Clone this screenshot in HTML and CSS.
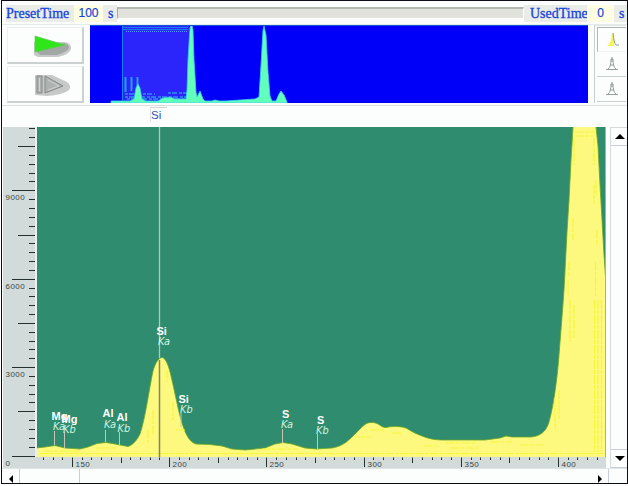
FILE: index.html
```html
<!DOCTYPE html>
<html lang="en">
<head>
    <meta charset="UTF-8">
    <title>Spectrum</title>
    <link rel="stylesheet" href="styles.css">
</head>
<body>
    <div class="window">
        <div class="topbar">
            <span class="time-label">PresetTime</span>
            <span class="time-value">100</span>
            <span class="time-unit">s</span>
            <div class="progress"></div>
            <span class="time-label used">UsedTime</span>
            <span class="time-value used-value">0</span>
            <span class="time-unit">s</span>
        </div>

        <div class="overview">
            <div class="controls">
                <button class="control" aria-label="Start">
                    <svg width="42" height="24" viewBox="0 0 42 24">
                        <path class="shadow-soft" d="M2 8V21L6 23H26Q38 20 39 15Q40 9 32 8Z"/>
                        <path class="shadow" d="M4 17L8 21H25Q35 18 37 14Q37 10 32 9Z"/>
                        <path class="go" d="M3 2L33 11L3 18Z"/>
                    </svg>
                </button>
                <button class="control" aria-label="Stop">
                    <svg width="42" height="24" viewBox="0 0 42 24">
                        <path class="shadow-soft" d="M3 2H20L35 9Q40 13 37 17Q31 22 15 23L3 22Z"/>
                        <path class="stop" d="M5 3H10V20H5ZM13 3L31 13L13 20Z"/>
                        <path class="shine" d="M7.500 5V18M16 7L27 13L16 17"/>
                    </svg>
                </button>
            </div>
            <svg class="minimap" width="498" height="78" viewBox="90 25 498 78">
                <rect class="range" x="123" y="25" width="66" height="77"/>
                <path class="range-line" d="M123 27.5H188M123 29.5H188M122.5 25V102"/>
                <path class="range-dots" d="M126 31.5H187"/>
                <path class="range-bars" d="M125.500 77V92M131.500 77V91M137.500 77V93"/>
                <path class="range-noise" d="M125 94H136M143 94H155M168 93H187M125 97H187M127 99H184"/>
                <path class="mini-curve" d="M111 103V101H130L134 99L136 88L138 84L140 88L142 99L146 101H158L163 98L170 97L175 99H186L187 90L188 60L190 27L192 25L193 30L194 60L196 92L197 97L200 91L203 99L205 101H212L215 100L219 101H226L240 100L255 99L259 97L261 65L263 30L264 26L266 35L268 72L270 96L272 101H276L279 94L281 91L284 95L287 102V103Z"/>
                <path class="mini-edge" d="M90 25.5H588"/>
            </svg>
            <div class="modes">
                <button class="mode active" aria-label="Filled peak">
                    <svg width="16" height="16" viewBox="0 0 16 16">
                        <path class="peak-fill" d="M2 14Q6 12 7 2L9 1V14Z"/>
                        <path class="peak-line" d="M8 1Q9 11 11 13H14"/>
                    </svg>
                </button>
                <button class="mode" aria-label="Outline peak">
                    <svg width="14" height="14" viewBox="0 0 14 14">
                        <path class="peak-line" d="M1 12.5H13M3 12Q6 10 6 2H8Q8 10 11 12M7 0V5M5 8H9"/>
                    </svg>
                </button>
                <button class="mode" aria-label="Line peak">
                    <svg width="14" height="14" viewBox="0 0 14 14">
                        <path class="peak-line" d="M1 12.5H13M3 12Q6 10 6 2H8Q8 10 11 12M7 0V5M5 8H9"/>
                    </svg>
                </button>
            </div>
        </div>

        <div class="element-bar"><span class="element">Si</span></div>

        <div class="main">
            <div class="chart">
                <svg class="y-axis" width="34" height="341" viewBox="3 127 34 341">
                    <g id="y-ticks"></g>
                    <path class="axis-edge" d="M36 127V457"/>
                </svg>
                <svg class="plot" width="569" height="330" viewBox="37 127 569 330">
                    <path class="cursor-top" d="M159.5 127V358"/>
                    <path class="curve" d="M36 458V448L45 447L55 445.5L65 448L80 449L88 447L97 443.5L106 442.500L115 444L128 446.500C133 445 137 440 140 434C145 420 149 390 153 371C155 364 158 358 162 357.500C166 358 169 367 171 376C176 397 178 410 182 423C186 436 190 442 196 444L210 444.500L222 446L232 449L245 450L265 448L275 444L283 442.500L292 444L305 448L316 449L332 448C344 446 349 440 358 431C363 426 366 422.500 371 422.500C379 422 381 428 386 427.500C392 426 400 426 406 428C411 431 416 434 422 436C431 440 440 440 445 440H485L500 438L506 436L512 437H531C540 436 546 432 549 422C553 408 557 382 559 355C561 330 563 305 564 290L567 232L569 200L571 160L573 127V126H596V127L598 146L600 185L602 220L604 255L606 284V458Z"/>
                    <g class="grain">
                        <path d="M594.500 300V452M598 300V452M601.500 300V452M596 180V196M597 230V246M595.500 262V296M568 280V296M573 218V240M569 262V277"/>
                        <path d="M575 132H595M575 136H594M574 138V165M594 138V165M594 185V204M570 300V342M574 305V338M555 398V430M559 390V420"/>
                        <path d="M40 453.500H604M44 451H80M96 448H116M148 430V442M153 410V434M167 370V382M173 402V420M176 430H186M262 449H298M356 437H372M370 430H384M392 433H402M424 446H440M446 443H476M450 448H480M490 442H512M520 445H545"/>
                    </g>
                    <path class="plot-edge" d="M605.5 127V457"/>
                    <path class="cursor" d="M159.5 360V457"/>
                    <path class="marker" d="M54.5 431V445M64.5 432V448M105.5 430V442M119.5 432V446M181 413V427M282.5 429V443M317.5 434V449"/>
                    <g class="symbol">
                        <text x="51.5" y="420">Mg</text>
                        <text x="61.5" y="423">Mg</text>
                        <text x="102.5" y="417">Al</text>
                        <text x="116.5" y="421">Al</text>
                        <text x="156.5" y="335">Si</text>
                        <text x="178.5" y="403">Si</text>
                        <text x="282" y="418">S</text>
                        <text x="317" y="424">S</text>
                    </g>
                    <g class="line-name">
                        <text x="53" y="430">Ka</text>
                        <text x="63" y="433">Kb</text>
                        <text x="104" y="428">Ka</text>
                        <text x="117.5" y="432">Kb</text>
                        <text x="158" y="345">Ka</text>
                        <text x="180" y="413">Kb</text>
                        <text x="281" y="428">Ka</text>
                        <text x="316" y="434">Kb</text>
                    </g>
                </svg>
                <svg class="x-axis" width="569" height="11" viewBox="37 457 569 11">
                    <g id="x-ticks"></g>
                </svg>
            </div>
            <div class="v-scroll">
                <div class="arrow-box"><span class="arrow up"></span></div>
                <div class="arrow-box down-box"><span class="arrow down"></span></div>
            </div>
        </div>

        <div class="h-scroll">
            <div class="h-arrow"><span class="arrow left"></span></div>
            <div class="thumb"></div>
            <div class="h-arrow end"><span class="arrow right"></span></div>
        </div>
    </div>
    <script src="script.js"></script>
</body>
</html>
```
FILE: styles.css
```css
* {
    box-sizing: border-box;
}
body {
    margin: 0;
    background: #fff;
    font-family: "Liberation Sans", Arial, sans-serif;
}
.window {
    width: 627px;
    height: 484px;
    margin-left: 1px;
    border: 1px solid #0c0c12;
    background: #fcfdfd;
    overflow: hidden;
}
svg {
    display: block;
}
button {
    padding: 0;
    border: 0;
    background: none;
}

/* time bar */
.topbar {
    display: flex;
    align-items: center;
    height: 24px;
    padding: 3px 0 2px 4px;
    border-bottom: 1px solid #e4ecea;
}
.topbar > * {
    flex: none;
}
.time-label, .time-unit {
    height: 17px;
    background: #e9ece7;
    color: #1745dc;
    font: 14px/17px "Liberation Serif", "Times New Roman", serif;
    -webkit-text-stroke: 0.3px #1745dc;
}
.time-label {
    width: 68px;
    letter-spacing: 0;
    white-space: nowrap;
}
.time-value {
    width: 29px;
    height: 17px;
    background: #fffde2;
    color: #1745dc;
    font-size: 12px;
    line-height: 17px;
    text-align: center;
    -webkit-text-stroke: 0.2px #1745dc;
}
.time-unit {
    width: 14px;
    padding-left: 5px;
}
.progress {
    width: 407px;
    height: 12px;
    border: 1px solid #fff;
    border-top: 2px solid #b2b7b0;
    border-left: 1px solid #a5aaa4;
    background: #e1e2dc;
}
.used {
    width: 63px;
    padding-left: 6px;
}
.used-value {
    width: 27px;
}

/* overview row */
.overview {
    display: flex;
    height: 81px;
    border-bottom: 1px solid #d9dede;
}
.controls {
    display: flex;
    flex-direction: column;
    gap: 2px;
    width: 88px;
    padding: 2px 6px 0 5px;
}
.control {
    display: flex;
    align-items: center;
    justify-content: center;
    height: 37px;
    padding: 2px 0 0 16px;
    border-right: 2px solid #cbd1d1;
    border-bottom: 2px solid #cbd1d1;
    border-top: 1px solid #edf0f0;
    border-left: 1px solid #edf0f0;
}
.shadow {
    fill: #a3a7a6;
}
.shadow-soft {
    fill: #c6c9c8;
}
.go {
    fill: #2fe61b;
    stroke: #62c955;
    stroke-width: 0.7;
}
.stop {
    fill: #aeb2b1;
    stroke: #858b89;
}
.shine {
    fill: none;
    stroke: #d0d3d2;
}
.minimap {
    background: #0000f9;
}
.range {
    fill: #2b25fb;
}
.range-line, .range-dots, .range-bars, .range-noise, .mini-edge {
    fill: none;
    stroke: #167ff0;
}
.range-dots {
    stroke: #5a9bfa;
    stroke-dasharray: 1 1;
}
.range-bars {
    stroke: #269df2;
    stroke-width: 2;
}
.range-noise {
    stroke: #2c90ee;
    stroke-width: 1.5;
    stroke-dasharray: 3 1 5 2;
}
.mini-edge {
    stroke: #1555dd;
}
.mini-curve {
    fill: #62ffba;
    stroke: #3bcbed;
    stroke-width: 0.8;
}
.modes {
    width: 32px;
    height: 78px;
    margin-left: 6px;
    border-left: 1px solid #c9d0d0;
    border-top: 1px solid #dfe5e5;
    padding: 1px 0 0 2px;
}
.mode {
    display: flex;
    align-items: center;
    justify-content: center;
    width: 100%;
    height: 25px;
    padding-left: 1px;
    border-bottom: 1px solid #c9d0d0;
}
.mode.active {
    border-top: 1px solid #adb5b5;
    border-left: 1px solid #adb5b5;
    border-bottom-color: #f2f5f5;
}
.peak-fill {
    fill: #f5f356;
}
.peak-line {
    fill: none;
    stroke: #899390;
    stroke-width: 0.9;
}

.element-bar {
    height: 21px;
    padding: 1px 0 0 148px;
}
.element {
    display: block;
    width: 17px;
    height: 15px;
    border-top: 1px solid #d2d7d9;
    border-left: 1px solid #e0e3e3;
    color: #3152c8;
    font-size: 11.5px;
    line-height: 14px;
}

/* spectrum */
.main {
    display: flex;
    height: 341px;
}
.chart {
    display: grid;
    grid-template-columns: 34px 569px;
    grid-template-rows: 330px 11px;
    width: 605px;
    padding-left: 1px;
}
.y-axis {
    grid-row: 1 / 3;
    background: #d2dada;
}
.plot {
    background: #2f8c6e;
}
.x-axis {
    background: #d2dada;
}
.axis-edge {
    stroke: #f3f7f6;
    stroke-width: 1.5;
}
.tick {
    stroke: #24302e;
    fill: none;
}
.tick-label {
    fill: #3a4644;
    font-family: "Liberation Sans", Arial, sans-serif;
    font-size: 8px;
    letter-spacing: 0.45px;
}
.curve {
    fill: #fcf97e;
    stroke: #6ba51f;
    stroke-width: 0.8;
}
.grain {
    fill: none;
    stroke: #f6f63c;
    stroke-width: 1.2;
    stroke-dasharray: 9 1 4 1;
}
.plot-edge {
    stroke: #7cc98a;
}
.cursor-top {
    stroke: #b6c4bd;
    stroke-width: 1.3;
}
.cursor {
    stroke: #86836a;
    stroke-width: 1.5;
}
.marker {
    stroke: #c5c5b5;
}
.symbol {
    fill: #fff;
    font-size: 11px;
    font-weight: bold;
}
.line-name {
    fill: #d5f5e4;
    font-family: "DejaVu Sans", sans-serif;
    font-size: 9.8px;
    font-style: italic;
}

/* scrollbars */
.v-scroll {
    display: flex;
    flex-direction: column;
    justify-content: space-between;
    width: 17px;
    margin-left: 3px;
    border-left: 1px solid #d5dadd;
    border-top: 1px solid #d5dadd;
}
.arrow-box {
    display: flex;
    align-items: center;
    justify-content: center;
    height: 18px;
    padding-left: 2px;
    border-bottom: 1px solid #c8ced1;
}
.down-box {
    height: 19px;
    border-top: 1px solid #c8ced1;
}
.arrow {
    border: 4px solid transparent;
}
.up {
    border-width: 0 5px 5px;
    border-bottom-color: #000;
}
.down {
    border-width: 5px 5px 0;
    border-top-color: #000;
}
.left {
    border-width: 4px 4px 4px 0;
    border-right-color: #000;
}
.right {
    border-width: 4px 0 4px 4px;
    border-left-color: #000;
}
.h-scroll {
    display: flex;
    height: 15px;
    border-top: 1px solid #dfe4e4;
}
.h-arrow {
    display: flex;
    align-items: center;
    justify-content: center;
    width: 18px;
    padding-top: 5px;
    border-right: 1px solid #c8ced1;
}
.thumb {
    width: 60px;
    border-right: 1px solid #c8ced1;
}
.end {
    margin-left: 511px;
}
```
FILE: script.js
```js
const NS = 'http://www.w3.org/2000/svg';

function addTick(group, d) {
    const path = document.createElementNS(NS, 'path');
    path.setAttribute('class', 'tick');
    path.setAttribute('d', d);
    group.appendChild(path);
}

function addLabel(group, x, y, value) {
    const text = document.createElementNS(NS, 'text');
    text.setAttribute('class', 'tick-label');
    text.setAttribute('x', x);
    text.setAttribute('y', y);
    text.textContent = value;
    group.appendChild(text);
}

// counts, 300 per tick
const yTicks = document.getElementById('y-ticks');
for (let i = 0; i <= 37; i++) {
    const y = Math.floor(456 - i * 8.84) + 0.5;
    const x = i % 10 === 0 ? 12 : i % 5 === 0 ? 18 : 29;
    addTick(yTicks, `M${x} ${y}H35`);
    if (i % 10 === 0) {
        addLabel(yTicks, 5.5, i === 0 ? 465.5 : y + 9, i * 300);
    }
}

// channels, 5 per tick
const xTicks = document.getElementById('x-ticks');
for (let i = -3; i <= 54; i++) {
    const x = Math.floor(72.5 + i * 9.72) + 0.5;
    const bottom = i % 10 === 0 ? 467 : i % 5 === 0 ? 463 : 460;
    addTick(xTicks, `M${x} 457.5V${bottom}`);
    if (i % 10 === 0) {
        addLabel(xTicks, x + 3, 467, 150 + i * 5);
    }
}
```
